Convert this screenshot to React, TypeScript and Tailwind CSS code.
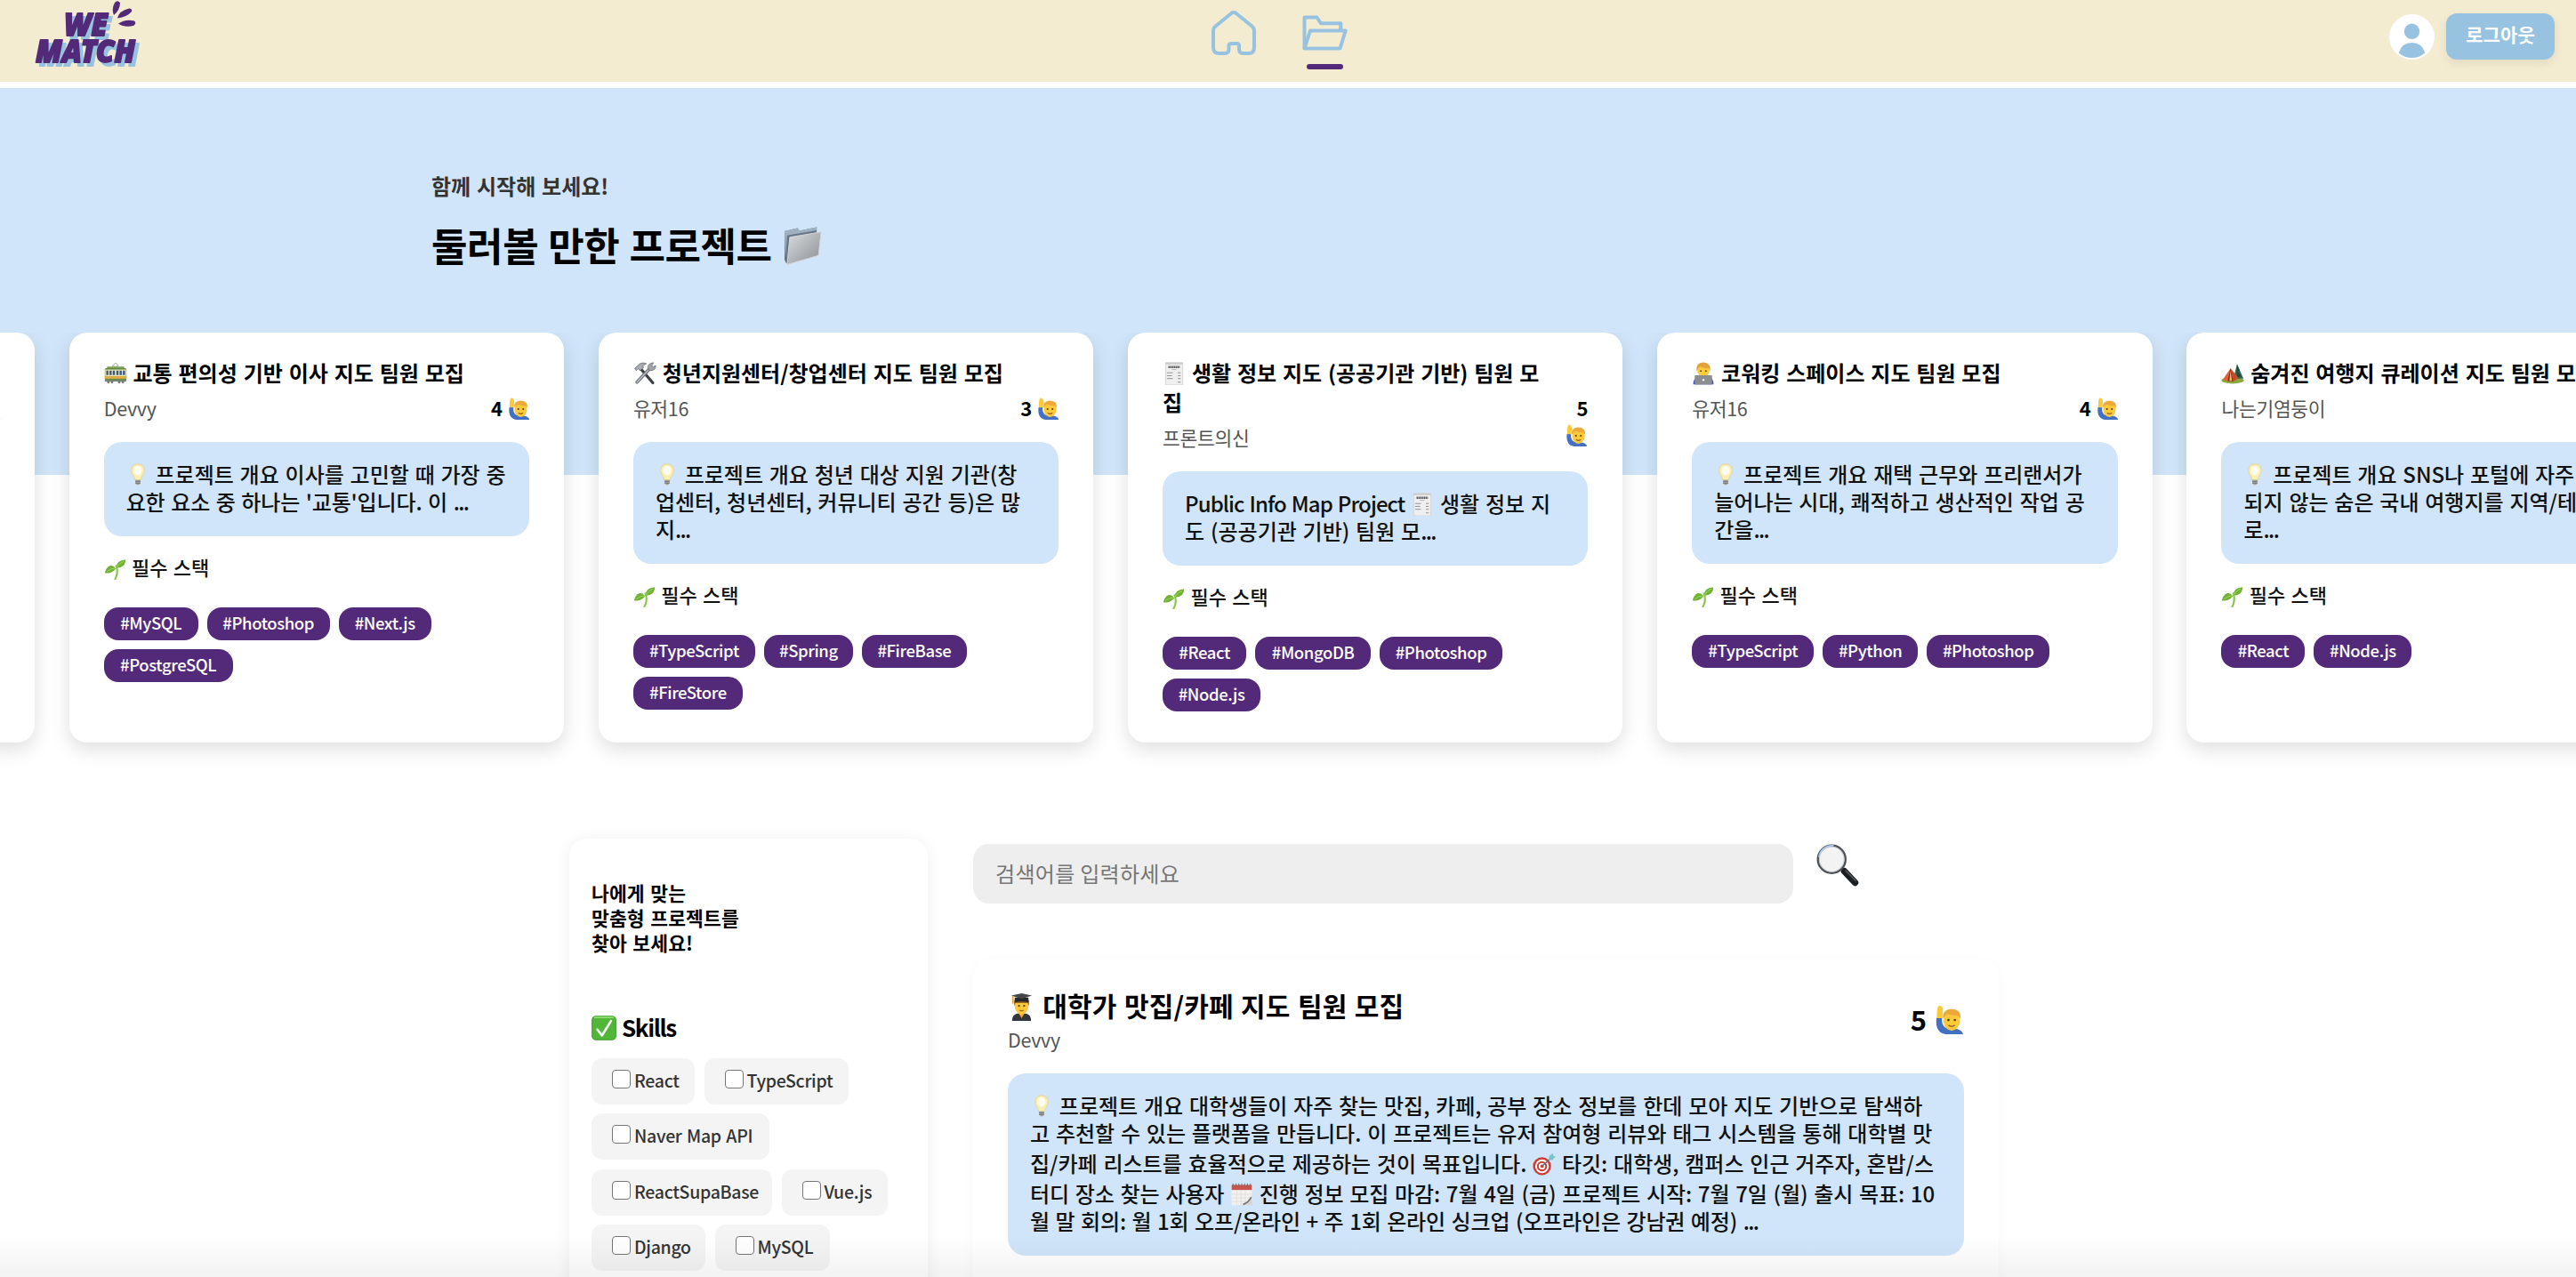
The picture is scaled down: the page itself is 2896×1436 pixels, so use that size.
import React from "react";

type IconProps = { className?: string };

function Svg({ className = "", label, children }: IconProps & { label: string; children: React.ReactNode }) {
  return (
    <svg viewBox="0 0 32 32" role="img" aria-label={label} className={`inline-block shrink-0 ${className}`}>
      {children}
    </svg>
  );
}

const SM = "w-[26px] h-[26px] align-[-4px]";

function Tram() {
  return (
    <Svg label="🚋" className={SM}>
      <path d="M11 5.500L16 1.500L20 5L16 6.500Z" fill="none" stroke="#9aa09c" strokeWidth="1" />
      <rect x="4" y="6.500" width="24" height="2.500" rx="1" fill="#7d9c58" />
      <rect x="1" y="8.500" width="30" height="17" rx="2" fill="#5f8c45" />
      <rect x="1.500" y="10.500" width="29" height="9.500" fill="#efe6b4" />
      <path d="M3 12h3v6H3zM7.500 12h3v6h-3zM12 12h3v6h-3zM17 12h3v6h-3zM21.500 12h3v6h-3zM26 12h3v6h-3z" fill="#3a5c85" />
      <rect x="1" y="20" width="30" height="3.200" fill="#e6ad45" />
      <rect x="1" y="25" width="30" height="2" fill="#6d7b68" />
      <circle cx="6" cy="28" r="1.800" fill="#777" /><circle cx="11" cy="28" r="1.800" fill="#777" />
      <circle cx="21" cy="28" r="1.800" fill="#777" /><circle cx="26" cy="28" r="1.800" fill="#777" />
    </Svg>
  );
}

function Tools() {
  return (
    <Svg label="🛠" className={SM}>
      <path d="M9 8L27 29" stroke="#3d3f43" strokeWidth="4" strokeLinecap="round" />
      <path d="M2 9L9 2.500Q14 0 18 2.500L13 5L14 8L9 12L7 9L4 12Z" fill="#a9adb2" stroke="#666b72" strokeWidth="1" />
      <path d="M5 28L23 9" stroke="#6f747b" strokeWidth="4.500" strokeLinecap="round" />
      <path d="M5 28L22 10" stroke="#bfc3c8" strokeWidth="1.600" strokeLinecap="round" />
      <path d="M21 11Q18 5 24 2L28 1L25.500 5L27.500 7L31 5Q31 12 24 12Z" fill="#9fa4aa" stroke="#6a6f76" strokeWidth="1" />
    </Svg>
  );
}

function Receipt() {
  return (
    <Svg label="🧾" className={SM}>
      <rect x="4" y="1" width="24" height="31" fill="#efefef" stroke="#cfcfcf" strokeWidth="1" />
      <rect x="4" y="1" width="24" height="2.500" fill="#cdcdcd" />
      <path d="M8 7H24" stroke="#5c5c5c" strokeWidth="3" strokeDasharray="2 .6" />
      <path d="M13 10.500H19" stroke="#aaa" strokeWidth="1" />
      <path d="M6 15H14M6 19H13M6 23H14M21 15H25M21 19H25M21 23H25M21 28H25" stroke="#8f8f8f" strokeWidth="1.200" />
    </Svg>
  );
}

function Coder() {
  return (
    <Svg label="👨‍💻" className={SM}>
      <path d="M2 31Q2 21 10 20H22Q30 21 30 31Z" fill="#3f52b8" />
      <circle cx="16" cy="12" r="8.500" fill="#fbcb3c" />
      <path d="M6.500 13Q5 1 16 .5Q27 1 25.500 13L23.500 9Q16 9 12 6.500Q9 8 8.500 10Z" fill="#e3a33a" />
      <circle cx="12.500" cy="12.500" r="1.100" fill="#5a3a12" /><circle cx="19.500" cy="12.500" r="1.100" fill="#5a3a12" />
      <rect x="4" y="18.500" width="24" height="13" rx="1" fill="#8b8d91" />
      <circle cx="16" cy="25" r="1.500" fill="#f1f1f1" />
    </Svg>
  );
}

function Camp() {
  return (
    <Svg label="🏕" className={SM}>
      <ellipse cx="16" cy="25.500" rx="15.500" ry="4.500" fill="#8aa83f" />
      <path d="M22 3L31 23H17Z" fill="#2f6a4a" /><path d="M22 3L26 12L23 13L28 20L22 22Z" fill="#1f4d3b" />
      <path d="M13 9L2 25L14 27L23 22Z" fill="#e0643a" />
      <path d="M13 9L9 26.500L17 27Z" fill="#7c2b1d" /><path d="M13 12L11.500 26H15Z" fill="#f0c35a" />
      <path d="M13 9L24 22L17 27Z" fill="#c94a2b" />
    </Svg>
  );
}

function Bulb() {
  return (
    <Svg label="💡" className={SM}>
      <path d="M16 1Q25 1.500 25 10Q25 14 22 17.500Q20.500 20 20 23H12Q11.500 20 10 17.500Q7 14 7 10Q7 1.500 16 1Z" fill="#fbf0b4" stroke="#e3cf86" strokeWidth="1" />
      <ellipse cx="16" cy="10" rx="5.500" ry="6.500" fill="#fffdf0" />
      <path d="M12.500 23H19.500V28Q16 32 12.500 28Z" fill="#a5a49f" />
      <path d="M12.500 25H19.500M12.500 27.500H19.500" stroke="#6d6c69" strokeWidth="1" />
    </Svg>
  );
}

function Sprout() {
  return (
    <Svg label="🌱" className="h-[25px] w-[25px] align-[-5px]">
      <path d="M16 31Q21 22 17.500 12" fill="none" stroke="#8cc34b" strokeWidth="2.800" strokeLinecap="round" />
      <path d="M18 15Q17 4 31 3Q31 15 18 15Z" fill="#6fb234" />
      <path d="M17 16Q12 9 6 13Q2 16 1 22Q10 24 17 16Z" fill="#6fb234" />
      <path d="M18 14Q22 8 28 5.500M16 15.500Q10 15 4 20" fill="none" stroke="#a4d865" strokeWidth="1.200" />
    </Svg>
  );
}

function RaisedHand({ className }: IconProps) {
  return (
    <Svg label="🙋‍♂️" className={className}>
      <path d="M2 14H8Q7 22 12 25L25 26.500Q30 28 31 32H12Q0 30 2 14Z" fill="#4470c4" />
      <path d="M2.500 14.500Q2 8 3.500 2Q5 -.5 7 1.500Q9 2 9 6L8.500 14.500Z" fill="#fbc93a" />
      <ellipse cx="18.500" cy="17" rx="9" ry="11" fill="#fbc93a" />
      <path d="M9 15Q8 5 18.500 4.500Q29.500 5 28 15L26 12Q19 12 14 10Q11 11.500 9 15Z" fill="#eda93a" />
      <circle cx="15" cy="16.500" r="1.300" fill="#4b3415" /><circle cx="22" cy="16.500" r="1.300" fill="#4b3415" />
      <path d="M15.500 22.500Q18.500 24.500 21.500 22.500" fill="none" stroke="#a05c22" strokeWidth="1.400" strokeLinecap="round" />
    </Svg>
  );
}

function Graduate() {
  return (
    <Svg label="👨‍🎓" className="h-[31px] w-[31px] align-[-5px]">
      <path d="M5 32Q5 24.500 11 23.500H21Q27 24.500 27 32Z" fill="#33363a" />
      <path d="M12 22H20L16 29Z" fill="#f4a829" />
      <ellipse cx="16" cy="14.500" rx="8" ry="10" fill="#fbc93a" />
      <path d="M7.500 15V8H24.500V15L23 11H9Z" fill="#7a4f22" />
      <path d="M8 5H24V10.500Q16 8 8 10.500Z" fill="#26282b" />
      <path d="M16 0L28 2.500L16 6.500L4 2.500Z" fill="#43464b" />
      <path d="M6 3V12" stroke="#e9a12c" strokeWidth="1.600" />
      <circle cx="13" cy="14.500" r="1.200" fill="#4b3415" /><circle cx="19" cy="14.500" r="1.200" fill="#4b3415" />
      <path d="M13.500 19.500Q16 21.500 18.500 19.500" fill="none" stroke="#a05c22" strokeWidth="1.200" />
    </Svg>
  );
}

function Target() {
  return (
    <Svg label="🎯" className={SM}>
      <circle cx="13" cy="19" r="12.500" fill="#cf3a35" /><circle cx="13" cy="19" r="9.500" fill="#fff" />
      <circle cx="13" cy="19" r="7" fill="#cf3a35" /><circle cx="13" cy="19" r="4.500" fill="#fff" /><circle cx="13" cy="19" r="2.300" fill="#cf3a35" />
      <path d="M13 19L25 8" stroke="#48737c" strokeWidth="1.800" />
      <path d="M22 11L23 5L28 1L28.500 4.500L32 5.500L27.500 10Z" fill="#79c4c8" />
    </Svg>
  );
}

function Calendar() {
  return (
    <Svg label="🗓" className={SM}>
      <path d="M2 3H30V24L24 31H2Z" fill="#f2f1ef" />
      <rect x="2" y="3" width="28" height="7" fill="#c9544f" />
      <path d="M4 1V5M8 1V5M12 1V5M16 1V5M20 1V5M24 1V5M28 1V5" stroke="#6b6b6b" strokeWidth="1.200" />
      <path d="M2 16H30M2 21H30M2 26H26M9 10V31M15 10V31M21 10V31" stroke="#dad9d7" strokeWidth=".8" />
      <path d="M14 31Q25 28 30 17V31Z" fill="#d5d5d5" /><path d="M18 30Q26 27 29 20" fill="none" stroke="#6f6f6f" strokeWidth="2" />
    </Svg>
  );
}

function Check() {
  return (
    <Svg label="✅" className="mt-[5px] h-[28px] w-[28px]">
      <rect x=".8" y=".8" width="30.400" height="30.400" rx="5" fill="#52b738" stroke="#3e9a2d" strokeWidth="1.200" />
      <path d="M4 2.500H28" stroke="#8fdc72" strokeWidth="2" strokeLinecap="round" />
      <path d="M7.500 18L13.500 25.500L25 7" fill="none" stroke="#fff" strokeWidth="3" strokeLinecap="round" strokeLinejoin="round" />
    </Svg>
  );
}

function Magnifier() {
  return (
    <Svg label="🔍" className="h-[48px] w-[48px]">
      <path d="M21 20.500L29 29" stroke="#1c1f22" strokeWidth="5" strokeLinecap="round" />
      <path d="M22 20L29.500 27.500" stroke="#565a5f" strokeWidth="1" strokeLinecap="round" />
      <circle cx="11.500" cy="11.500" r="10.300" fill="#f3f3f4" stroke="#4c5157" strokeWidth="1.700" />
      <path d="M2 10A9.800 9.800 0 0 1 13 1.300" fill="none" stroke="#a7c8f0" strokeWidth="1.200" />
      <circle cx="11.500" cy="11.500" r="9.300" fill="none" stroke="#c7cacd" strokeWidth=".7" />
    </Svg>
  );
}

function Folder() {
  return (
    <svg viewBox="0 0 44 44" role="img" aria-label="📁" className="ml-[13px] inline-block h-[43px] w-[43px] align-[-4px]">
      <defs>
        <linearGradient id="front" x1="0" y1="0" x2="1" y2="1">
          <stop offset="0" stopColor="#dcdee0" /><stop offset="1" stopColor="#888c91" />
        </linearGradient>
      </defs>
      <path d="M1 5L16 1.500L18 4.500L38 .5V30L3 42L1 38Z" fill="#647585" />
      <path d="M1 5L16 1.500L18 4.500L38 .5V4L4 10L2 36Z" fill="#9fb1c1" />
      <path d="M7 12L43 6L40 33L4 43.500Z" fill="url(#front)" stroke="#d3d5d7" strokeWidth="1" />
    </svg>
  );
}

function Logo() {
  return (
    <svg viewBox="0 0 130 78" className="h-[78px] w-[130px]" role="img" aria-label="WE MATCH">
      <g className="drop-shadow-[4px_4px_0_#97c3e0]" fill="#532a79" stroke="#532a79" fontFamily='"Noto Sans", sans-serif' fontWeight="900" fontStyle="italic" fontSize="36" strokeWidth="1.800" strokeLinejoin="round">
        <text x="35" y="39.500" textLength="49" lengthAdjust="spacingAndGlyphs">WE</text>
        <text x="3" y="69.500" textLength="112" lengthAdjust="spacingAndGlyphs">MATCH</text>
      </g>
      <g fill="#532a79">
        <path d="M91 17Q88 10 92 3Q95 -.5 98 3Q98 11 91 17Z" />
        <path d="M95 20.500Q97 12 108 9.500Q112 9.500 111 13Q106 19 95 20.500Z" />
        <path d="M96 26.500Q104 21 114 23.500Q117 26 113 29Q103 31.500 96 26.500Z" />
      </g>
    </svg>
  );
}

function Header() {
  return (
    <header className="flex h-[92px] items-start bg-[#f4ecd1]">
      <div className="ml-[37px] w-[130px]"><Logo /></div>
      <nav className="ml-[1195px] flex items-start">
        <a className="mt-3 block">
          <svg viewBox="0 0 50 50" className="h-[50px] w-[50px]" fill="none" stroke="#98c3e0" strokeWidth="4" strokeLinejoin="round">
            <path d="M22 3.200Q25 .8 28 3.200L45.500 17.500Q48 19.500 48 22.500V41.500Q48 48 41.500 48H35.500Q31 48 31 43.500V39.500Q31 37 28.500 37H22Q19.500 37 19.500 39.500V43.500Q19.500 48 15 48H8.500Q2 48 2 41.500V22.500Q2 19.500 4.500 17.500Z" />
          </svg>
        </a>
        <a className="ml-[52px] mt-[17px] flex flex-col items-center">
          <svg viewBox="0 0 51 40" className="h-[40px] w-[51px]" fill="none" stroke="#98c3e0" strokeWidth="4" strokeLinejoin="round">
            <path d="M2.500 37.500V2.500H16.500L21 9.300H43.300V17.500" />
            <path d="M2.500 37.500L9 17.500H48.700L42.500 37.500Z" />
          </svg>
          <span className="mt-[15px] h-[6px] w-[41px] rounded-full bg-[#532a79]" />
        </a>
      </nav>
      <div className="ml-auto mr-6 mt-[15px] flex items-center">
        <svg viewBox="0 0 51 51" className="h-[51px] w-[51px]">
          <circle cx="25.500" cy="25.500" r="25.500" fill="#fff" />
          <circle cx="25.500" cy="19.300" r="8.700" fill="#98c3e0" />
          <path d="M10.700 43.500Q14 32 25.500 32Q37 32 40.300 43.500Q34 49 25.500 49Q17 49 10.700 43.500Z" fill="#98c3e0" />
        </svg>
        <button className="ml-[13px] h-[52px] w-[122px] rounded-[12px] bg-[#98c3e0] pb-[5px] text-[21px] font-bold tracking-[0.100px] text-white shadow-[0_4px_12px_rgba(0,0,0,0.080)]">
          로그아웃
        </button>
      </div>
    </header>
  );
}

function Dots() {
  return <span className="tracking-[-1.600px]">...</span>;
}

type Card = {
  title: React.ReactNode[];
  author: string;
  count: number;
  wrapCount?: boolean;
  body: React.ReactNode[];
  tags: [string, string][];
};

const CARDS: Card[] = [
  { title: [""], author: "", count: 4, body: ["", "", ""], tags: [] },
  {
    title: [<><Tram /> 교통 편의성 기반 이사 지도 팀원 모집</>],
    author: "Devvy",
    count: 4,
    body: [<><Bulb /> 프로젝트 개요 이사를 고민할 때 가장 중</>, <span className="tracking-[-0.150px]">요한 요소 중 하나는 '교통'입니다. 이 <Dots /></span>],
    tags: [["#MySQL", "w-[106px]"], ["#Photoshop", "w-[138px]"], ["#Next.js", "w-[104px]"], ["#PostgreSQL", "w-[145px]"]],
  },
  {
    title: [<><Tools /> 청년지원센터/창업센터 지도 팀원 모집</>],
    author: "유저16",
    count: 3,
    body: [<><Bulb /> 프로젝트 개요 청년 대상 지원 기관(창</>, "업센터, 청년센터, 커뮤니티 공간 등)은 많", <>지<Dots /></>],
    tags: [["#TypeScript", "w-[137px]"], ["#Spring", "w-[100px]"], ["#FireBase", "w-[118px]"], ["#FireStore", "w-[123px]"]],
  },
  {
    title: [<><Receipt /> 생활 정보 지도 (공공기관 기반) 팀원 모</>, "집"],
    author: "프론트의신",
    count: 5,
    wrapCount: true,
    body: [
      <><span className="tracking-[-0.920px]">Public Info Map Project</span> <Receipt /> 생활 정보 지</>,
      <>도 (공공기관 기반) 팀원 모<Dots /></>,
    ],
    tags: [["#React", "w-[94px]"], ["#MongoDB", "w-[130px]"], ["#Photoshop", "w-[138px]"], ["#Node.js", "w-[110px]"]],
  },
  {
    title: [<><Coder /> 코워킹 스페이스 지도 팀원 모집</>],
    author: "유저16",
    count: 4,
    body: [<><Bulb /> 프로젝트 개요 재택 근무와 프리랜서가</>, "늘어나는 시대, 쾌적하고 생산적인 작업 공", <>간을<Dots /></>],
    tags: [["#TypeScript", "w-[137px]"], ["#Python", "w-[107px]"], ["#Photoshop", "w-[138px]"]],
  },
  {
    title: [<><Camp /> 숨겨진 여행지 큐레이션 지도 팀원 모집</>],
    author: "나는기염둥이",
    count: 4,
    body: [<><Bulb /> 프로젝트 개요 SNS나 포털에 자주</>, "되지 않는 숨은 국내 여행지를 지역/테마", <>로<Dots /></>],
    tags: [["#React", "w-[94px]"], ["#Node.js", "w-[110px]"]],
  },
];

function ProjectCard({ card }: { card: Card }) {
  return (
    <article className="h-[461px] w-[556.400px] shrink-0 rounded-[20px] bg-white px-[39px] pt-[28px] shadow-[0_8px_22px_rgba(0,0,0,0.130)]">
      <div className="flex items-end justify-between">
        <div>
          <h3 className="text-2xl font-bold leading-[33px] text-black">
            {card.title.map((line, i) => <div key={i} className="h-[33px]">{line}</div>)}
          </h3>
          <p className="mt-[9px] h-[29px] text-[21.500px] leading-[30px] tracking-[-0.300px] text-[#555]">{card.author}</p>
        </div>
        {card.wrapCount ? (
          <div className="mb-px flex flex-col items-end text-[22px] font-bold leading-[31px] text-black">
            <span>{card.count}</span>
            <RaisedHand className="my-[3px] h-[25px] w-[25px]" />
          </div>
        ) : (
          <div className="-mb-px flex h-[31px] gap-[6px] text-[22px] font-bold leading-[31px] text-black">
            <span>{card.count}</span>
            <RaisedHand className="-mr-px mt-[4px] h-[25px] w-[25px]" />
          </div>
        )}
      </div>
      <div className="mt-6 rounded-[20px] bg-[#d0e5f9] px-[25px] pb-6 pt-5 text-2xl font-medium leading-[31px] text-[#111]">
        {card.body.map((line, i) => <div key={i} className="h-[31px]">{line}</div>)}
      </div>
      <h4 className="mt-[19px] h-[31px] text-[22px] font-medium leading-[31px] text-[#111]"><Sprout /> 필수 스택</h4>
      <ul className="mt-[30px] flex flex-wrap gap-[10px]">
        {card.tags.map(([tag, width]) => (
          <li key={tag} className={`${width} flex h-[37px] justify-center rounded-[16px] bg-[#532a79] text-[18.500px] font-medium leading-[34px] tracking-[-0.400px] text-white`}>{tag}</li>
        ))}
      </ul>
    </article>
  );
}

const SKILLS: [string, string][] = [
  ["React", "w-[116px]"], ["TypeScript", "w-[162px]"], ["Naver Map API", "w-[200px]"], ["ReactSupaBase", "w-[203px]"],
  ["Vue.js", "w-[119px]"], ["Django", "w-[128px]"], ["MySQL", "w-[129px]"],
];

function Sidebar() {
  return (
    <aside className="h-[560px] w-[403px] rounded-[20px] bg-white px-[25px] pt-[47px] shadow-[0_2px_18px_rgba(0,0,0,0.070)]">
      <p className="text-[21.500px] font-bold leading-[28px] tracking-[0.150px] text-black">나에게 맞는<br />맞춤형 프로젝트를<br />찾아 보세요!</p>
      <h2 className="mt-[63px] flex h-9 gap-[6px] text-[26px] font-bold leading-9 tracking-[-1.400px] text-black"><Check />Skills</h2>
      <div className="mt-[17px] flex flex-wrap gap-x-[10.500px] gap-y-[10.400px]">
        {SKILLS.map(([skill, width]) => (
          <label key={skill} className={`${width} flex h-[52px] rounded-[12px] bg-[#f4f4f4] pl-[23px]`}>
            <input type="checkbox" className="mt-[13px] h-[21px] w-[21px] shrink-0 appearance-none rounded-[4px] border-[1.500px] border-[#767676] bg-white" />
            <span className="ml-[4px] mt-[10px] whitespace-nowrap text-[19.500px] font-medium leading-[30px] tracking-[-0.300px] text-[#333]">{skill}</span>
          </label>
        ))}
      </div>
    </aside>
  );
}

function Results() {
  return (
    <section className="w-[1153px] pt-[6px]">
      <div className="flex gap-[26px]">
        <input placeholder="검색어를 입력하세요" className="h-[67px] w-[922px] rounded-[18px] bg-[#eee] pb-[3px] pl-[25px] text-2xl tracking-[0.300px] placeholder:text-[#767676]" />
        <Magnifier />
      </div>
      <article className="mt-[63px] h-[430px] rounded-[20px] bg-white px-[39px] pt-[30px] shadow-[0_4px_16px_rgba(0,0,0,0.030)]">
        <div className="flex justify-between">
          <div>
            <h3 className="h-[42px] text-[30px] font-bold leading-[42px] tracking-[0.150px] text-black"><Graduate /> 대학가 맛집/카페 지도 팀원 모집</h3>
            <p className="mt-[3px] h-[29px] text-[21.500px] leading-[30px] tracking-[-0.300px] text-[#555]">Devvy</p>
          </div>
          <div className="flex gap-[9px] self-center text-[31px] font-bold leading-[40px] text-black">
            <span>5</span>
            <RaisedHand className="mt-[4px] h-[33px] w-[33px]" />
          </div>
        </div>
        <div className="mt-6 rounded-[20px] bg-[#d0e5f9] px-[25px] pb-6 pt-5 text-2xl font-medium leading-[31px] text-[#111]">
          <div className="h-[31px]"><Bulb /> 프로젝트 개요 대학생들이 자주 찾는 맛집, 카페, 공부 장소 정보를 한데 모아 지도 기반으로 탐색하</div>
          <div className="h-[31px]">고 추천할 수 있는 플랫폼을 만듭니다. 이 프로젝트는 유저 참여형 리뷰와 태그 시스템을 통해 대학별 맛</div>
          <div className="h-[34px] pt-[3px]">집/카페 리스트를 효율적으로 제공하는 것이 목표입니다. <Target /> 타깃: 대학생, 캠퍼스 인근 거주자, 혼밥/스</div>
          <div className="h-[34px] pt-[3px] tracking-[-0.070px]">터디 장소 찾는 사용자 <Calendar /> 진행 정보 모집 마감: 7월 4일 (금) 프로젝트 시작: 7월 7일 (월) 출시 목표: 10</div>
          <div className="h-[31px] tracking-[-0.170px]">월 말 회의: 월 1회 오프/온라인 + 주 1회 온라인 싱크업 (오프라인은 강남권 예정) <Dots /></div>
        </div>
      </article>
    </section>
  );
}

export default function App() {
  return (
    <div className="relative h-[1436px] w-[2896px] overflow-hidden whitespace-nowrap bg-white font-['Noto_Sans_CJK_KR',sans-serif] [word-spacing:1.400px]">
      <Header />
      <section className="mt-[7px] h-[435px] bg-[#d0e5f9] pl-[485px] pt-[92px]">
        <p className="h-[36px] text-2xl font-bold leading-[36px] text-[#333]">함께 시작해 보세요!</p>
        <h1 className="mt-[18px] h-[60px] text-[44px] font-bold leading-[60px] tracking-[-0.400px] text-black">둘러볼 만한 프로젝트<Folder /></h1>
      </section>
      <section className="relative -mt-[160px] overflow-hidden pb-10">
        <div className="-ml-[517.500px] flex gap-[38.800px]">
          {CARDS.map((card, i) => <ProjectCard key={i} card={card} />)}
        </div>
      </section>
      <main className="ml-[640px] mt-[68px] flex gap-[51px]">
        <Sidebar />
        <Results />
      </main>
      <div className="pointer-events-none absolute inset-x-0 bottom-0 h-12 bg-linear-to-b from-transparent to-black/5" />
    </div>
  );
}
